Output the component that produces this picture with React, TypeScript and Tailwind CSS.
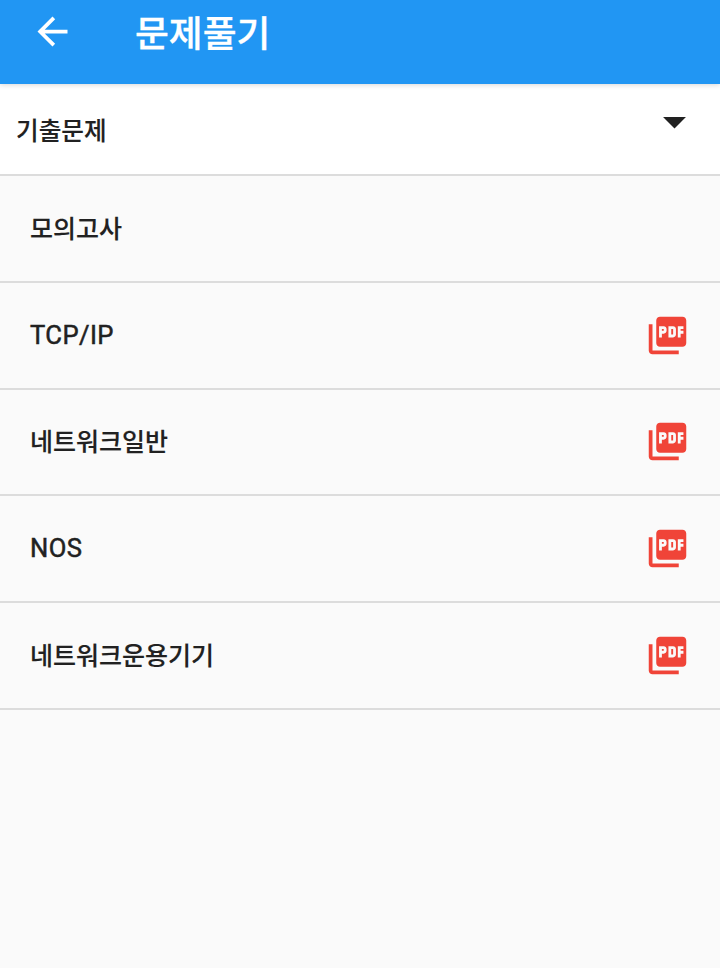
import { MdArrowBack, MdArrowDropDown, MdPictureAsPdf } from "react-icons/md";
import clsx from "clsx";

interface Subject {
  name: string;
  latin?: boolean;
  hasPdf: boolean;
}

const subjects: Subject[] = [
  { name: "모의고사", hasPdf: false },
  { name: "TCP/IP", latin: true, hasPdf: true },
  { name: "네트워크일반", hasPdf: true },
  { name: "NOS", latin: true, hasPdf: true },
  { name: "네트워크운용기기", hasPdf: true },
];

function Header() {
  return (
    <header className="h-[84px] shrink-0 flex items-start bg-[#2196f3] text-white shadow-[0_1px_5px_rgba(0,0,0,0.16)] z-10">
      <button className="ml-[30px] mt-[9px]" aria-label="Back">
        <MdArrowBack size={45} />
      </button>
      <h1 className="ml-[60px] mt-[10px] text-[36.8px] leading-[50px] font-medium [-webkit-text-stroke:0.3px]">문제풀기</h1>
    </header>
  );
}

function SubjectRow({ name, latin, hasPdf }: Subject) {
  return (
    <li className="h-[106.8px] flex items-center justify-between pl-[30px] pr-[30px] border-b-2 border-[#dcdcdc]">
      <span className={clsx(latin ? "pb-px text-[25.6px] font-normal tracking-[0.4px] [-webkit-text-stroke:0.5px]" : "pt-0.5 text-[25px] [-webkit-text-stroke:0.15px]")}>{name}</span>
      {hasPdf && <MdPictureAsPdf size={45} className="text-[#f04438]" />}
    </li>
  );
}

function App() {
  return (
    <div className="h-[968px] flex flex-col bg-[#fafafa] text-[#212121] font-medium font-['Roboto','Noto_Sans_CJK_KR',sans-serif]">
      <Header />
      <div className="h-[92px] flex items-center justify-between pl-4 pr-[18px] bg-white border-b-2 border-[#dcdcdc]">
        <span className="pt-1.5 text-[24.6px] [-webkit-text-stroke:0.15px]">기출문제</span>
        <MdArrowDropDown size={55} className="mb-[15px]" />
      </div>
      <ul>
        {subjects.map((subject) => (
          <SubjectRow key={subject.name} {...subject} />
        ))}
      </ul>
    </div>
  );
}

export default App;
